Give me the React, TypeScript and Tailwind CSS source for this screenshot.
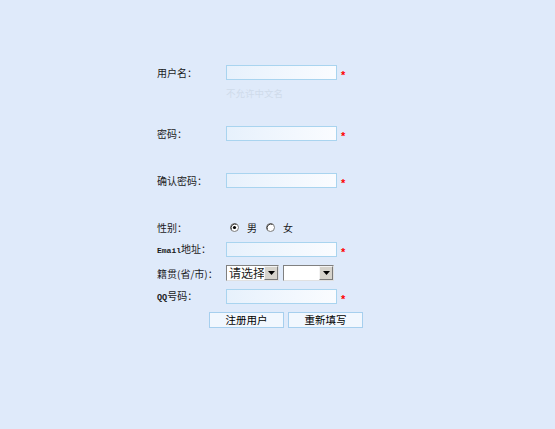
import React from "react";

const Star = () => (
  <span className="ml-[4px] mt-[5px] text-[11px] font-bold leading-none text-[#ff0000] font-['Liberation_Sans',sans-serif]">
    *
  </span>
);

const TextBox = ({ type = "text" }: { type?: string }) => (
  <input
    type={type}
    readOnly
    className="h-[15px] w-[111px] border border-[#a9d4ef] bg-gradient-to-r from-[#e7f1fc] to-[#fafcff] outline-none"
  />
);

const Row = ({
  label,
  children,
  className,
}: {
  label: React.ReactNode;
  children: React.ReactNode;
  className?: string;
}) => (
  <div className={"flex items-center " + (className ?? "h-[15px]")}>
    <div className="w-[69px] shrink-0 whitespace-nowrap leading-[15px]">{label}</div>
    {children}
  </div>
);

const Radio = ({ checked }: { checked?: boolean }) => (
  <svg width="9" height="9" viewBox="0 0 9 9">
    <circle cx="4.5" cy="4.5" r="4" fill="#fff" stroke="#7a7a7a" />
    <path d="M1.3 6.5 A4 4 0 0 1 6.5 1.3" fill="none" stroke="#303030" strokeWidth="1" />
    {checked && <circle cx="4.5" cy="4.5" r="1.6" fill="#000" />}
  </svg>
);

const Select = ({ text, width }: { text?: string; width: string }) => (
  <div className={"flex h-[16px] items-stretch border border-t-[#808080] border-l-[#808080] border-b-[#e0e0e0] border-r-[#e0e0e0] bg-white " + width}>
    <div className="flex-1 overflow-hidden whitespace-nowrap pl-[2px] text-[12px] leading-[14px]">{text}</div>
    <div className="flex w-[14px] items-center justify-center border border-t-[#f4f4f4] border-l-[#f4f4f4] border-b-[#7a7a7a] border-r-[#7a7a7a] bg-[#d6d3cc]">
      <svg width="7" height="4" viewBox="0 0 7 4">
        <path d="M0 0 H7 L3.5 4 Z" fill="#000" />
      </svg>
    </div>
  </div>
);

const Button = ({ children }: { children: React.ReactNode }) => (
  <button className="h-[16px] w-[75px] border border-[#a6cfee] bg-[#f1f7fe] text-[10.5px] leading-none text-black">
    {children}
  </button>
);

export default function App() {
  return (
    <div className="min-h-screen w-full bg-[#dfeafa] text-[10px] leading-[15px] text-[#1a1a1a] font-['Noto_Sans_CJK_SC',sans-serif]">
      <div className="flex flex-col pl-[157px] pt-[65px]">
        <Row label="用户名：">
          <TextBox />
          <Star />
        </Row>
        <div className="ml-[69px] mt-[8px] h-[11px] text-[9.5px] leading-[11px] text-[#cfdbea]">
          不允许中文名
        </div>
        <Row label="密码：" className="mt-[27px] h-[15px]">
          <TextBox type="password" />
          <Star />
        </Row>
        <Row label="确认密码：" className="mt-[32px] h-[15px]">
          <TextBox type="password" />
          <Star />
        </Row>
        <Row label="性别：" className="mt-[32px] h-[15px]">
          <div className="ml-[4px] flex items-center">
            <Radio checked />
            <span className="ml-[8px]">男</span>
            <span className="ml-[9px] flex"><Radio /></span>
            <span className="ml-[8px]">女</span>
          </div>
        </Row>
        <Row
          label={
            <>
              <span className="text-[8px] font-bold font-['Liberation_Mono',monospace]">Email</span>地址：
            </>
          }
          className="mt-[7px] h-[15px]"
        >
          <TextBox />
          <Star />
        </Row>
        <Row label="籍贯(省/市)：" className="mt-[8px] h-[16px]">
          <Select text="请选择省" width="w-[53px]" />
          <div className="ml-[4px]">
            <Select width="w-[51px]" />
          </div>
        </Row>
        <Row
          label={
            <>
              <span className="text-[8.5px] font-bold font-['Liberation_Mono',monospace]">QQ</span>号码：
            </>
          }
          className="mt-[8px] h-[15px]"
        >
          <TextBox />
          <Star />
        </Row>
        <div className="ml-[52px] mt-[8px] flex h-[16px] gap-[4px]">
          <Button>注册用户</Button>
          <Button>重新填写</Button>
        </div>
      </div>
    </div>
  );
}
